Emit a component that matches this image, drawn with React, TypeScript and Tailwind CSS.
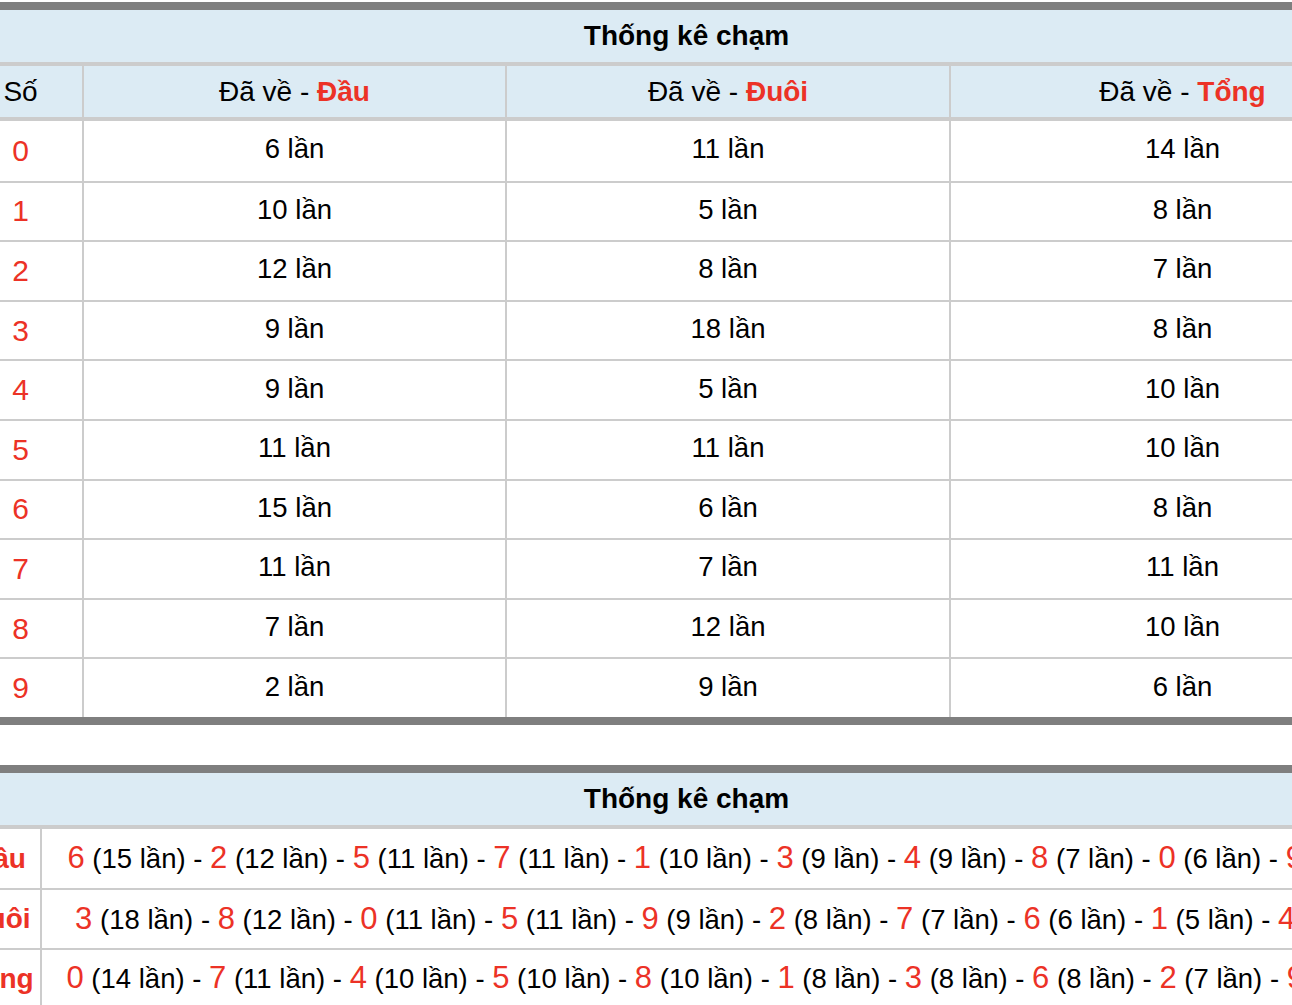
const dau = [6, 10, 12, 9, 9, 11, 15, 11, 7, 2];
const duoi = [11, 5, 8, 18, 5, 11, 6, 7, 12, 9];
const tong = [14, 8, 7, 8, 10, 10, 8, 11, 10, 6];

// sort digits by count, highest first (stable for ties)
const ranked = (counts: number[]) =>
  counts
    .map((count, digit) => ({ digit, count }))
    .sort((a, b) => b.count - a.count);

const summary = [
  { label: "Đầu", items: ranked(dau) },
  { label: "Đuôi", items: ranked(duoi) },
  { label: "Tổng", items: ranked(tong) },
];

const App = () => {
  return (
    <div className="min-h-screen overflow-hidden bg-white font-['Liberation_Sans',Arial,sans-serif] text-black">
      <div className="-ml-[41px] w-[1455px] pt-[2px]">
        {/* Table 1 */}
        <div className="border-y-[8px] border-[#7f7f7f]">
          <div className="flex h-[56px] items-center justify-center border-b-4 border-[#cccccc] bg-[#dcebf4] text-[28px] font-bold">
            Thống kê chạm
          </div>
          <div className="flex h-[55px] border-b-4 border-[#cccccc] bg-[#dcebf4] text-[28px]">
            <div className="flex w-[123px] items-center justify-center">Số</div>
            <div className="flex w-[423px] items-center justify-center border-l-2 border-[#cccccc]">
              Đã về -&nbsp;<span className="font-bold text-[#ec3226]">Đầu</span>
            </div>
            <div className="flex w-[444px] items-center justify-center border-l-2 border-[#cccccc]">
              Đã về -&nbsp;<span className="font-bold text-[#ec3226]">Đuôi</span>
            </div>
            <div className="flex flex-1 items-center justify-center border-l-2 border-[#cccccc]">
              Đã về -&nbsp;<span className="font-bold text-[#ec3226]">Tổng</span>
            </div>
          </div>
          {dau.map((_, i) => (
            <div
              key={i}
              className={`flex h-[59.6px] text-[27.5px] ${i > 0 ? "border-t-2 border-[#cccccc]" : ""}`}
            >
              <div className="flex w-[123px] items-center justify-center pb-[1px] text-[30px] text-[#ec3226]">
                {i}
              </div>
              <div className="flex w-[423px] items-center justify-center border-l-2 border-[#cccccc] pb-[4px]">
                {dau[i]} lần
              </div>
              <div className="flex w-[444px] items-center justify-center border-l-2 border-[#cccccc] pb-[4px]">
                {duoi[i]} lần
              </div>
              <div className="flex flex-1 items-center justify-center border-l-2 border-[#cccccc] pb-[4px]">
                {tong[i]} lần
              </div>
            </div>
          ))}
        </div>

        {/* Table 2 */}
        <div className="mt-[40px] border-t-[8px] border-[#7f7f7f]">
          <div className="flex h-[56px] items-center justify-center border-b-4 border-[#cccccc] bg-[#dcebf4] text-[28px] font-bold">
            Thống kê chạm
          </div>
          {summary.map((row, i) => (
            <div
              key={row.label}
              className={`flex h-[59.5px] ${i > 0 ? "border-t-2 border-[#cccccc]" : ""}`}
            >
              <div className="flex w-[81px] items-center justify-center text-[28px] font-bold text-[#ec3226]">
                {row.label}
              </div>
              <div className="flex flex-1 items-center justify-center border-l-2 border-[#cccccc] text-[27.5px]">
                <span className="whitespace-nowrap">
                  {row.items.map((it, j) => (
                    <span key={it.digit}>
                      {j > 0 ? " - " : ""}
                      <span className="text-[31px] text-[#ec3226]">{it.digit}</span> ({it.count} lần)
                    </span>
                  ))}
                </span>
              </div>
            </div>
          ))}
        </div>
      </div>
    </div>
  );
};

export default App;
